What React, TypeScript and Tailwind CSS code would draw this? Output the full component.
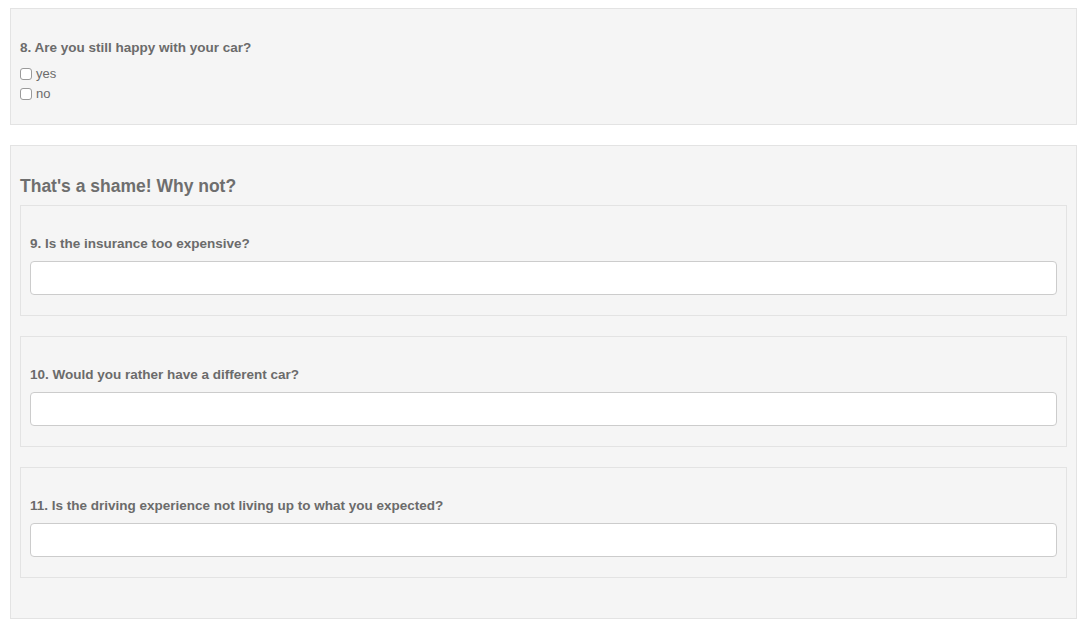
import React from "react";

const font = { fontFamily: '"Liberation Sans", Arial, Helvetica, sans-serif' };

function Checkbox({ label }: { label: string }) {
  return (
    <label className="flex items-center h-[20px] text-[13px] text-[#6b6b6b]">
      <span className="inline-block w-[12px] h-[12px] rounded-[3px] border border-[#9a9a9a] bg-white mr-[4px]" />
      <span>{label}</span>
    </label>
  );
}

function TextQuestion({ title }: { title: string }) {
  return (
    <div className="border border-[#e3e3e3] bg-[#f5f5f5] pt-[28px] pb-[20px] px-[9px] mb-[20px]">
      <div className="h-[20px] leading-[20px] text-[13.5px] font-bold text-[#6b6b6b]">{title}</div>
      <input
        type="text"
        className="mt-[7px] block w-full h-[34px] rounded-[4px] border border-[#cccccc] bg-white outline-none"
      />
    </div>
  );
}

export default function App() {
  return (
    <div className="pl-[10px] pt-[8px] bg-white min-h-screen" style={font}>
      <div className="w-[1067px] border border-[#e3e3e3] bg-[#f5f5f5] pt-[29px] pb-[20px] px-[9px]">
        <div className="h-[20px] leading-[20px] text-[13.5px] font-bold text-[#6b6b6b]">
          8. Are you still happy with your car?
        </div>
        <div className="mt-[6px]">
          <Checkbox label="yes" />
          <Checkbox label="no" />
        </div>
      </div>
      <div className="mt-[20px] w-[1067px] border border-[#e3e3e3] bg-[#f5f5f5] pt-[28px] pb-[20px] px-[9px]">
        <div className="h-[24px] leading-[24px] text-[17.5px] font-bold text-[#6e6e6e] mb-[7px]">
          That's a shame! Why not?
        </div>
        <TextQuestion title="9. Is the insurance too expensive?" />
        <TextQuestion title="10. Would you rather have a different car?" />
        <TextQuestion title="11. Is the driving experience not living up to what you expected?" />
      </div>
    </div>
  );
}
